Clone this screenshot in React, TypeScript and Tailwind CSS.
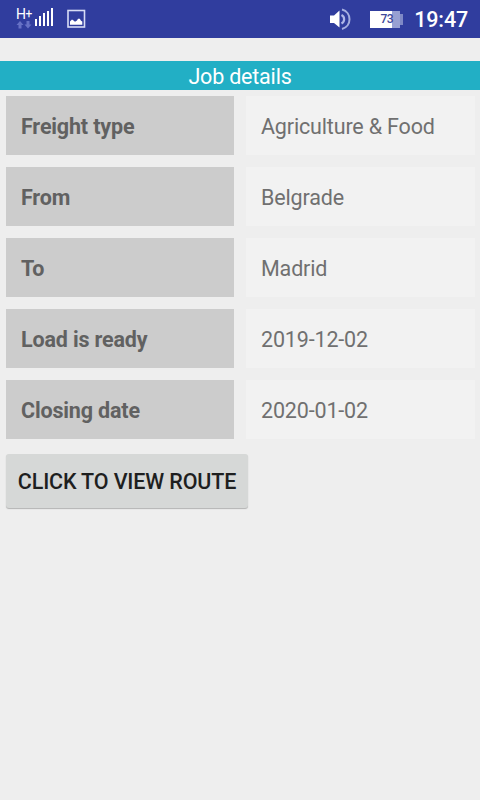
const rows = [
  { label: "Freight type", value: "Agriculture & Food" },
  { label: "From", value: "Belgrade" },
  { label: "To", value: "Madrid" },
  { label: "Load is ready", value: "2019-12-02" },
  { label: "Closing date", value: "2020-01-02" },
];

function StatusBar() {
  return (
    <header className="flex h-[38px] items-center bg-[#303d9e] text-white">
      <div className="ml-4 flex h-[22px] w-4 flex-col">
        <span className="flex h-[12px] items-center text-[14px] leading-[12px] font-normal tracking-[-0.5px]">
          H<span className="text-[12px] leading-[11px]">+</span>
        </span>
        <svg width="16" height="8" viewBox="0 0 16 8" className="mt-px shrink-0" fill="#6671c5">
          <path d="M4 0L7.5 4H5.5V7.5H2.5V4H.5z" />
          <path d="M12 7.5L8.5 3.5h2V0h3v3.5h2z" />
        </svg>
      </div>
      <svg width="20" height="20" viewBox="0 0 20 20" className="ml-[3px] -mt-1" fill="#fff">
        <path d="M0 12h2v7H0zM4 9h2v10H4zM8 6h2v13H8zM12 4h2v15h-2zM16 1h2v18h-2z" />
      </svg>
      <svg width="20" height="20" viewBox="0 0 20 20" className="ml-[11px]">
        <rect x="2" y="1.5" width="16.5" height="16.5" fill="none" stroke="#d7dcf5" strokeWidth="1.6" />
        <path d="M4 15.8v-3.3l2-2 1.5 1 1.5 1.2 2-1.2 1-1.8h1.8l1.2 2 1.3.8v3.3z" fill="#fff" />
      </svg>
      <svg width="22" height="24" viewBox="0 0 22 24" className="ml-auto" fill="none">
        <path d="M0 8.5h4L9.5 3.500v17L4 16H0z" fill="#fff" />
        <path d="M11.500 8c3.500 1.800 3.500 6.500 0 8.500" stroke="#b0b8e8" strokeWidth="2.200" />
        <path d="M12 2.500C22 5 22 19.500 12 22" stroke="#a5aee0" strokeWidth="2" />
      </svg>
      <div className="ml-[18px] flex items-center">
        <div className="flex h-[17px] w-[30px] items-center justify-center bg-[linear-gradient(90deg,#fff_0_22px,#98a0d2_22px)] pl-[3px] text-[12px] leading-none font-medium tracking-[-0.5px] text-[#3d489b]">
          73
        </div>
        <div className="h-[11px] w-[3px] bg-[#7f89c6]" />
      </div>
      <time className="mr-3 ml-[11px] pt-0.5 text-[21.5px] leading-[38px] font-medium">19:47</time>
    </header>
  );
}

export default function App() {
  return (
    <div className="h-[800px] w-[480px] overflow-hidden bg-[#eeeeee] font-[Roboto,sans-serif] text-[21.5px] tracking-[-0.16px]">
      <StatusBar />
      <main className="pt-[23px]">
        <h1 className="h-[29px] bg-[#22afc5] text-center leading-[32px] font-normal tracking-[-0.2px] text-white">
          Job details
        </h1>
        <dl className="mt-1.5 flex flex-col gap-3 pr-[5px] pl-1.5">
          {rows.map((row) => (
            <div key={row.label} className="flex h-[59px] gap-3 leading-[61px]">
              <dt className="w-[228px] bg-[#cccccc] pl-[15px] font-bold text-[#616161]">{row.label}</dt>
              <dd className="w-[229px] bg-[#f2f2f2] pl-[15px] text-[#707070]">{row.value}</dd>
            </div>
          ))}
        </dl>
        <button className="mt-[15px] ml-1.5 h-[54px] w-[242px] rounded-[3px] bg-[#d6d8d7] pt-0.5 font-medium tracking-[-0.15px] whitespace-nowrap text-[#1e1f1f] shadow-[0_1px_1px_rgba(0,0,0,0.25)]">
          CLICK TO VIEW ROUTE
        </button>
      </main>
    </div>
  );
}
